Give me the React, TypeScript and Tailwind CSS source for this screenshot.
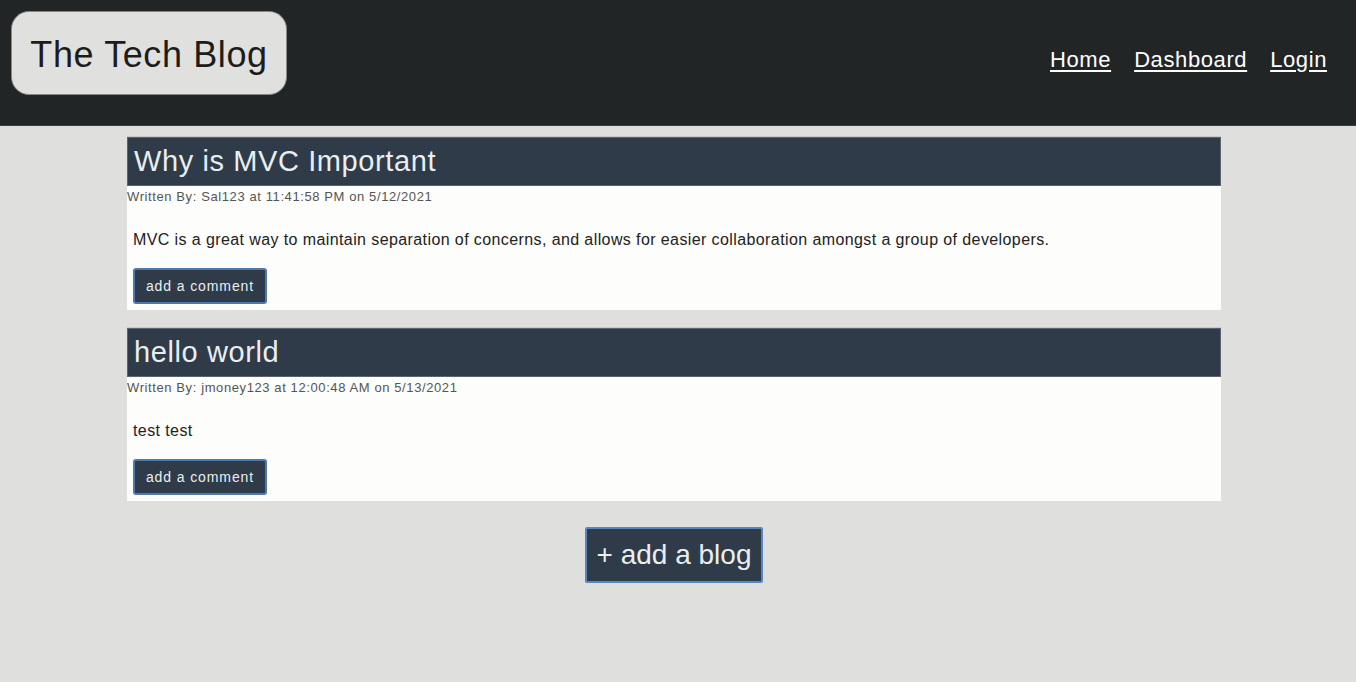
import React from "react";

const posts = [
  {
    title: "Why is MVC Important",
    meta: "Written By: Sal123 at 11:41:58 PM on 5/12/2021",
    body: "MVC is a great way to maintain separation of concerns, and allows for easier collaboration amongst a group of developers.",
  },
  {
    title: "hello world",
    meta: "Written By: jmoney123 at 12:00:48 AM on 5/13/2021",
    body: "test test",
  },
];

export default function App() {
  return (
    <div
      className="min-h-[682px] bg-[#dfdfde] text-[#222]"
      style={{ fontFamily: '"Liberation Sans", Arial, sans-serif' }}
    >
      <header className="h-[126px] bg-[#212526] border-b border-[#3a3e3f] flex items-start justify-between">
        <div className="mt-[11px] ml-[11px] w-[276px] h-[84px] rounded-[18px] bg-[#e0e0df] border border-[#888] flex items-center justify-center">
          <h1 className="text-[36px] tracking-[0.6px] text-[#1c1c1c] leading-none mt-[4px]">The Tech Blog</h1>
        </div>
        <nav className="mt-[43px] mr-[29px] flex gap-[23px] text-[22px] tracking-[0.6px] text-white">
          <a className="underline underline-offset-[3px]" href="#">Home</a>
          <a className="underline underline-offset-[3px]" href="#">Dashboard</a>
          <a className="underline underline-offset-[3px]" href="#">Login</a>
        </nav>
      </header>

      <main className="w-[1094px] ml-[127px] pt-[10px] flex flex-col gap-[17px]">
        {posts.map((p) => (
          <section key={p.title} className="bg-[#fdfdfc] h-[174px] border-t border-[#c8c8c8]">
            <div className="h-[49px] bg-[#2f3b48] border border-[#5a646d] flex items-center px-[6px]">
              <h2 className="text-[29px] tracking-[0.6px] text-[#e9eef1] leading-none">{p.title}</h2>
            </div>
            <p className="text-[13px] tracking-[0.6px] text-[#555] mt-[3px] leading-[16px]">{p.meta}</p>
            <p className="text-[16px] tracking-[0.4px] text-[#222] mt-[26px] ml-[6px] leading-[18px]">{p.body}</p>
            <button className="mt-[19px] ml-[6px] w-[134px] h-[36px] bg-[#2f3b48] border-2 border-[#4f79ad] rounded-[3px] text-[14px] tracking-[0.9px] text-[#e9eef1]">
              add a comment
            </button>
          </section>
        ))}
        <div className="flex justify-center mt-[9px]">
          <button className="w-[178px] h-[56px] bg-[#2f3b48] border-2 border-[#5a86c0] rounded-[2px] text-[28px] text-[#e9eef1]">
            + add a blog
          </button>
        </div>
      </main>
    </div>
  );
}
